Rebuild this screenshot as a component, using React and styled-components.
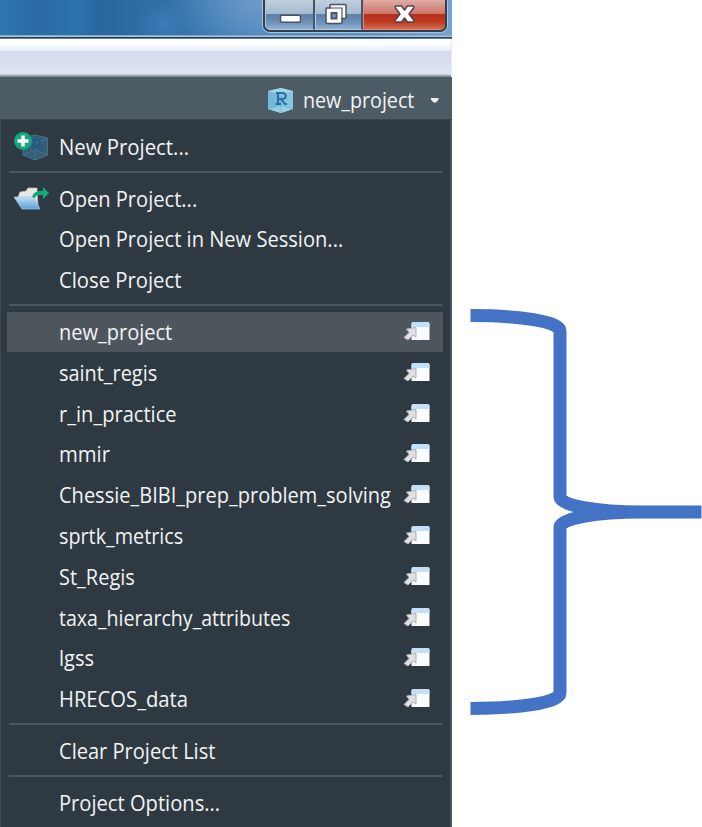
import React from "react";
import styled, { createGlobalStyle } from "styled-components";

const Global = createGlobalStyle`
  *, *::before, *::after { box-sizing: border-box; }
  body { margin: 0; background: #fff; overflow: hidden; font-family: "Open Sans", "Noto Sans", sans-serif; }
`;

const Page = styled.main`
  display: flex;
  width: 702px;
  height: 827px;
  overflow: hidden;
`;

const Window = styled.section`
  width: 452px;
  flex: none;
  display: flex;
  flex-direction: column;
`;

const TitleBar = styled.header`
  height: 35px;
  padding-right: 5px;
  display: flex;
  justify-content: flex-end;
  background:
    radial-gradient(ellipse 90px 60px at 260px 0, #6d9cc9 0, transparent 100%),
    radial-gradient(ellipse 26px 22px at 164px 24px, #3b7ab4 0, transparent 100%),
    linear-gradient(90deg, #2f76b0 0, #2a6ba4 38px, #2d73ad 76px, #29669b 100px, #2a6ba4 125px, #326fa9 165px, #3a79b3 225px, #4783bb 270px, #76a3ce 452px);
`;

const Controls = styled.div`
  display: flex;
  width: 184px;
  height: 32px;
  border: 2px solid #343d4b;
  border-top: 0;
  border-radius: 0 0 7px 7px;
  overflow: hidden;
  box-shadow: 0 0 0 1px #a7c5e1;
`;

const ControlButton = styled.button`
  flex: 0 0 ${(p) => p.$width}px;
  padding: 0;
  border: 1px solid ${(p) => (p.$danger ? "#d98c80" : "#b6cadd")};
  border-top: 0;
  border-right: ${(p) => (p.$danger ? "1px solid #d98c80" : "2px solid #44546b")};
  background: ${(p) =>
    p.$danger
      ? "linear-gradient(#deaba5 0, #cc7567 14px, #b92f1b 14px, #bd3b23 22px, #d66e50 100%)"
      : "linear-gradient(#c1d0df 0, #a5bad0 14px, #5d7fa4 14px, #6c90b6 22px, #8eb3d5 100%)"};
  display: flex;
`;

const Edge = styled.div`
  height: 4px;
  flex: none;
  background: linear-gradient(#7ea9ca 0 1px, #a9c7df 1px 2px, #263f59 2px 3px, #657d94 3px);
`;

const Toolbar = styled.div`
  height: 38px;
  flex: none;
  border-right: 1px solid #e9edf7;
  background: linear-gradient(#fff 0, #fcfdfe 5px, #e8edf6 12px, #d4daed 12px, #d9deef 22px, #e0e5f5 35px, #abb7c3 36px, #75818b 38px);
`;

const ProjectBar = styled.div`
  height: 43px;
  flex: none;
  display: flex;
  align-items: center;
  padding: 4px 12px 0 267px;
  background: #4d5b65;
  border-bottom: 1px solid #3a444d;
`;

const ProjectName = styled.div`
  display: flex;
  width: 128px;
  margin-left: 9px;
  flex: none;
`;

const Menu = styled.nav`
  flex: 1;
  padding: 6.4px 7px 0 6px;
  border-left: 1px solid #3d4a54;
  border-right: 2px solid #46545f;
  background: #2f3941;
`;

const Row = styled.div`
  height: 40.8px;
  display: flex;
  align-items: center;
  background: ${(p) => (p.$active ? "#4d565d" : "transparent")};
`;

const IconSlot = styled.span`
  width: 52px;
  height: 100%;
  padding-left: 7px;
  flex: none;
  display: flex;
  align-items: center;
`;

const Label = styled.span`
  flex: 1;
  min-width: 0;
  white-space: nowrap;
  color: #f1f4f4;
  font-size: 21.5px;
  line-height: 28px;
  transform: scaleX(${(p) => p.$fit});
  transform-origin: left center;
`;

const Separator = styled.hr`
  height: 2px;
  margin: 3.5px 1px 5.5px 2px;
  border: 0;
  background: #4a5761;
`;

const LaunchSlot = styled.span`
  width: 28px;
  height: 22px;
  margin: 0 12.5px 0 0;
  flex: none;
`;

const Annotation = styled.aside`
  width: 250px;
  padding-top: 300px;
`;

const Drawing = styled.svg`
  display: block;
  flex: none;
  overflow: visible;
`;

const MinimizeIcon = () => (
  <Drawing width="46" height="30"><rect x="14.5" y="15.2" width="20" height="7" rx="1.5" fill="#fff" stroke="#4d5363" strokeWidth="1.5" /></Drawing>
);

const RestoreIcon = () => (
  <Drawing width="43" height="30">
    <path d="M15 4.500h14q1 0 1 1v12q0 1-1 1h-3v4q0 1-1 1H11q-1 0-1-1V9q0-1 1-1h3V5.500q0-1 1-1Z" fill="#f8fafc" stroke="#4c5261" strokeWidth="1.5" />
    <path d="M14 8h12v11" fill="none" stroke="#4c5261" strokeWidth="1.2" />
    <rect x="15.500" y="13" width="5" height="5.500" fill="#7b9ec3" stroke="#4c5261" strokeWidth="1.9" />
  </Drawing>
);

const CloseIcon = () => (
  <Drawing width="81" height="30"><path d="M32 6h5.500l3 4 3-4H49q1 0 1 1.500L45 14l5 6.500q0 1.500-1 1.500h-5.500l-3-4-3 4H32q-1 0-1-1.500l5-6.500-5-6.500Q31 6 32 6Z" fill="#fff" stroke="#4c4550" strokeWidth="1.5" strokeLinejoin="round" /></Drawing>
);

const ProjectIcon = () => (
  <Drawing width="27" height="27" viewBox="0 0 27 27">
    <path d="M14 1 26 4v18l-12 4L1 22V4Z" fill="#86c5df" />
    <path d="M1 4 14 1l12 3-12 4Z" fill="#a1d6e7" /><path d="M14 8v18L1 22V4Z" fill="#78b8d8" />
    <path d="m14 18 12 4-12 4-13-4Z" fill="#a0d9e5" opacity=".7" /><path d="M14 8v17M1 22l13-4 12 4" stroke="#55b7cb" strokeWidth=".7" fill="none" />
    <path d="M9 6h6c5 0 5 6 0 6h-4M11 6v11M8.500 17H14M14 12l4 5h2" stroke="#276da7" strokeWidth="2" fill="none" />
  </Drawing>
);

const NewProjectIcon = () => (
  <Drawing width="36" height="30" viewBox="0 0 36 30">
    <path d="m21 3 12.500 3v17L21 28 9 23V6Z" fill="#355e76" stroke="#39768a" />
    <path d="m9 7 12 4 12.500-4M21 11v17M9 23l12-5 12.500 5" fill="none" stroke="#3e7589" strokeWidth="1" />
    <path d="M18 8h5c4 0 4 6 0 6h-4M20 8v10m3-4 4 5" stroke="#215b8d" strokeWidth="2" fill="none" />
    <circle cx="9" cy="9" r="9" fill="#12a77c" /><path d="M9 3.500v11M3.500 9h11" stroke="#fff" strokeWidth="3.500" />
  </Drawing>
);

const OpenProjectIcon = () => (
  <Drawing width="36" height="24" viewBox="0 0 36 24">
    <defs><linearGradient id="folder" x2="0" y2="1"><stop stopColor="#c1e1f5" /><stop offset="1" stopColor="#5c9fd9" /></linearGradient></defs>
    <path d="m4 10 2-5 6-1 2-3h9l1 19-8 1Z" fill="#e8e8e5" stroke="#b8bdbd" strokeWidth=".7" />
    <path d="M0 10h20l6 12H8Z" fill="url(#folder)" stroke="#a2c9e5" strokeWidth=".7" />
    <path d="M18 10c2-6 6-6 11-6V0l6 6-6 6V8c-5 0-7 0-8 3Z" fill="#13aa7c" />
  </Drawing>
);

const LaunchIcon = () => (
  <Drawing width="28" height="22" viewBox="0 0 28 22">
    <path d="M8.500 19V3q0-2 2-2h14q2 0 2 2v16Z" fill="#fbfcfe" />
    <path d="M8.500 6V3q0-2 2-2h14q2 0 2 2v3Z" fill="#c2e0f8" />
    <path d="m1 16.500 5-5L3.500 8 13 6.500V16l-3-2-5 5Z" fill="#e0e1e5" stroke="#a9adb5" strokeWidth="1" />
  </Drawing>
);

const Caret = () => (
  <Drawing width="8" height="5"><path d="M0 0h7.500v1.500L5 4.500H2.500L0 1.500Z" fill="#edf0f1" /></Drawing>
);

const Brace = () => (
  <Drawing width="250" height="420" viewBox="0 0 250 420">
    <path d="M18.500 15.500C67 15.500 108 21.500 108 31V197C108 205.500 144 212 190 212C144 212 108 218.500 108 227V393C108 402.500 67 408.500 18.500 408.500M180 212H249.500" fill="none" stroke="#4472c4" strokeWidth="13" />
  </Drawing>
);

const groups = [
  [{ text: "New Project...", fit: 0.946, icon: <NewProjectIcon /> }],
  [
    { text: "Open Project...", fit: 0.935, icon: <OpenProjectIcon /> },
    { text: "Open Project in New Session...", fit: 0.935 },
    { text: "Close Project", fit: 0.942 },
  ],
  [
    { text: "new_project", fit: 0.93, active: true, launch: true },
    { text: "saint_regis", fit: 0.925, launch: true },
    { text: "r_in_practice", fit: 0.934, launch: true },
    { text: "mmir", fit: 0.945, launch: true },
    { text: "Chessie_BIBI_prep_problem_solving", fit: 0.931, launch: true },
    { text: "sprtk_metrics", fit: 0.92, launch: true },
    { text: "St_Regis", fit: 0.93, launch: true },
    { text: "taxa_hierarchy_attributes", fit: 0.911, launch: true },
    { text: "lgss", fit: 0.93, launch: true },
    { text: "HRECOS_data", fit: 0.94, launch: true },
  ],
  [{ text: "Clear Project List", fit: 0.933 }],
  [{ text: "Project Options...", fit: 0.937 }],
];

export default function App() {
  return (
    <>
      <Global />
      <Page>
        <Window>
          <TitleBar>
            <Controls>
              <ControlButton $width={50} aria-label="Minimize"><MinimizeIcon /></ControlButton>
              <ControlButton $width={48} aria-label="Restore"><RestoreIcon /></ControlButton>
              <ControlButton $width={82} $danger aria-label="Close"><CloseIcon /></ControlButton>
            </Controls>
          </TitleBar>
          <Edge />
          <Toolbar />
          <ProjectBar>
            <ProjectIcon />
            <ProjectName><Label $fit={0.915}>new_project</Label></ProjectName>
            <Caret />
          </ProjectBar>
          <Menu>
            {groups.map((items, index) => (
              <React.Fragment key={index}>
                {index > 0 && <Separator />}
                {items.map((item) => (
                  <Row key={item.text} $active={item.active}>
                    <IconSlot>{item.icon}</IconSlot>
                    <Label $fit={item.fit}>{item.text}</Label>
                    {item.launch && <LaunchSlot><LaunchIcon /></LaunchSlot>}
                  </Row>
                ))}
              </React.Fragment>
            ))}
          </Menu>
        </Window>
        <Annotation><Brace /></Annotation>
      </Page>
    </>
  );
}
